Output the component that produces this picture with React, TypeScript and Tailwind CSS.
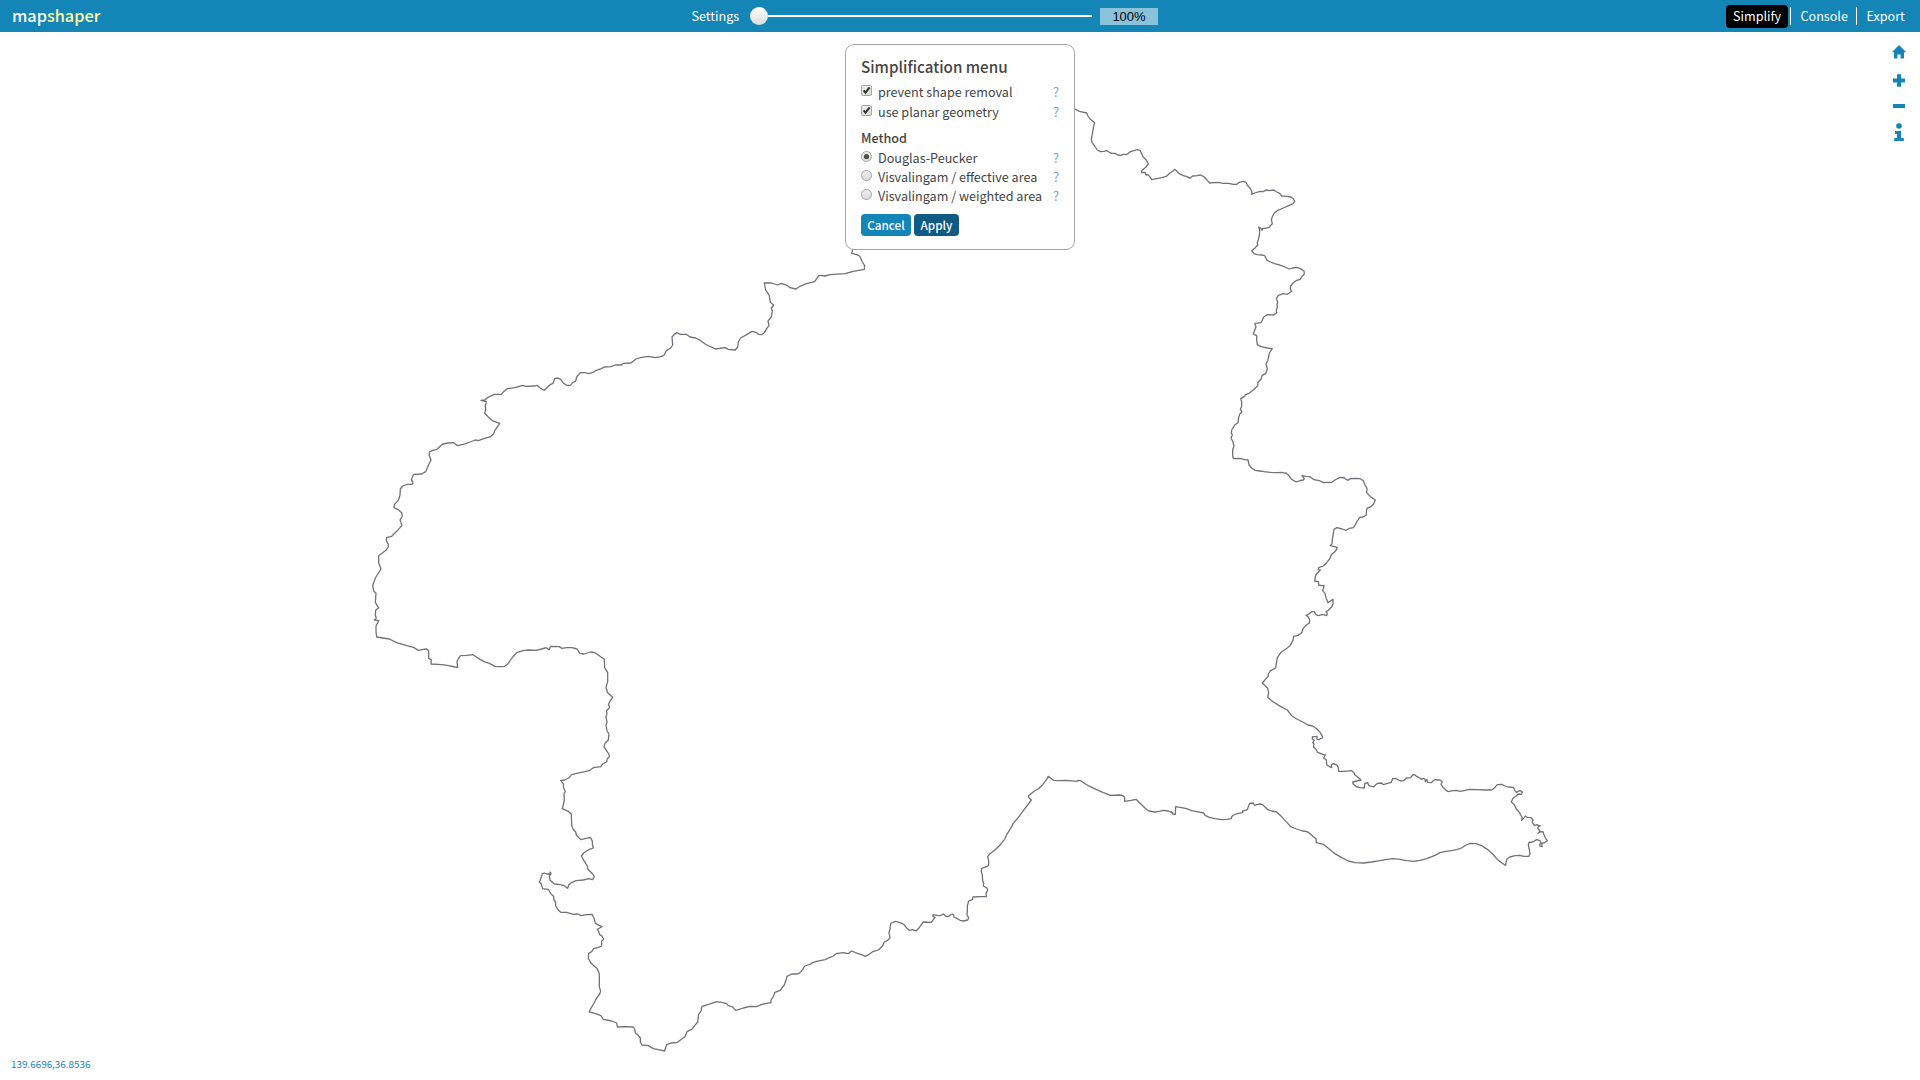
import React from 'react';

type Section = { x: number; y: number; points: string };

// Boundary line, digitised in tiles at three units per pixel.
const SECTIONS: Section[] = [
  {
    x: 1060,
    y: 90,
    points:
      '40,52 45,57 58,64 80,69 84,78 90,87 98,93 104,99 101,108 99,120 97,132 94,148 96,158 104,168 112,180 121,185 131,184 141,182 148,187 155,190 165,190 173,195 181,196 192,193 201,193 211,185 222,182 232,179 240,181 245,190 249,200 258,209 265,222 258,231 245,242 245,248 256,247 258,255 264,254 270,261 275,269 290,266 305,263 319,259 330,249 339,243 344,238 350,243 358,251 370,257 381,260 390,265 398,258 411,257 422,255 433,261 442,271 449,279 460,278 475,277 490,280 506,280 520,283 530,283 538,277 550,274 558,277 563,287 572,297 576,305 575,313 584,309 600,304 610,305 618,300 629,302 641,300 650,306 659,310 665,318 680,319 693,321 700,326 704,334 699,341 686,347 670,354 652,362 643,369 637,380 634,390 637,401 631,407 628,412 615,415 608,415 606,421 602,415 596,411 599,421 598,437 595,449 592,457 593,465 586,473 575,482 582,491 592,494 605,495 614,497 621,511 632,516 643,521 653,523 664,527 675,531 688,537 697,534 710,532 721,536 732,543 733,552 725,560 721,568 708,572 699,579 692,588 691,598 695,603 688,609 682,613 670,611 655,616 649,626 653,635 651,645 652,652 649,661 650,668 641,675 622,674 611,681 607,691 602,698 585,700 588,712 584,721 580,732 590,737 590,750 592,764 603,770 622,774 637,776 628,789 626,801 623,812 618,822 622,835 618,850 606,857 603,868 594,877 593,887 579,901 565,911 557,914 552,920 542,926 545,936 545,949 541,958 546,966 539,973 536,983 534,998 524,1005 515,1020 514,1029 517,1035 513,1044 519,1056 522,1068 518,1079 518,1095 520,1106 540,1105 554,1109 564,1110 567,1125 575,1134 585,1141 600,1143 612,1145 630,1147 652,1148 664,1147 680,1150',
  },
  {
    x: 1180,
    y: 470,
    points:
      '318,9 325,15 335,28 349,36 360,32 370,30 373,26 366,17 378,19 390,20 402,29 418,32 430,38 443,37 456,37 465,30 480,22 493,24 503,31 512,26 526,25 541,26 550,32 554,43 561,55 560,68 571,80 586,90 581,102 572,110 561,115 559,126 559,135 549,141 539,142 530,156 525,166 520,173 508,175 499,181 486,177 471,173 462,178 460,192 457,207 456,221 451,227 462,229 472,233 466,244 454,254 449,267 440,278 430,288 416,293 415,299 421,300 410,311 406,320 404,333 415,335 416,345 424,347 432,346 431,352 428,362 435,370 438,383 442,393 444,398 452,392 459,388 459,401 455,411 445,421 438,425 442,430 440,437 429,433 415,437 408,434 402,425 395,425 387,432 378,436 385,441 389,450 388,459 379,465 369,476 365,488 355,496 341,499 339,511 330,527 318,537 303,547 292,563 289,580 287,594 272,602 265,612 264,619 247,639 263,655 266,668 263,682 280,696 296,706 308,713 322,720 335,737 350,747 368,756 384,765 398,768 410,776 419,785 426,797 428,804 421,806 417,809 411,808 411,799 403,800 397,801 397,807 403,811 398,817 402,822 401,832 408,838 413,847 428,853 436,855 433,860 431,864 439,870 440,884 447,889 455,893 454,884 461,881 472,886 475,894 476,904 492,904 515,902 521,907 525,915 536,923 543,930 530,933 518,936 519,941 529,950 540,953 553,954 554,941 563,938 566,946 581,951 588,943',
  },
  {
    x: 1180,
    y: 720,
    points:
      '588,193 594,190 605,189 610,194 623,190 634,187 638,176 647,175 653,179 662,183 671,182 679,174 692,173 698,165 704,164 711,170 720,174 724,178 730,175 735,178 736,185 741,178 743,187 754,188 759,183 764,179 773,180 780,180 787,185 783,193 789,202 798,211 805,215 819,212 830,211 840,214 855,211 868,208 890,209 915,210 935,210 943,204 952,194 965,193 975,198 985,201 1000,202 1004,211 1009,217 1016,213 1022,212 1027,217 1024,223 1014,222 1009,227 998,236 994,246 1003,254 1009,267 1018,277 1022,285 1026,292 1025,301 1032,294 1036,288 1042,292 1053,293 1059,299 1057,307 1063,316 1071,314 1075,316 1081,317 1075,320 1073,324 1080,333 1074,340 1080,336 1089,335 1091,341 1095,352 1102,362 1095,367 1086,370 1086,380 1079,378 1080,372 1084,371 1080,362 1070,359 1058,366 1047,367 1045,375 1048,389 1050,402 1046,409 1031,409 1020,406 1005,407 990,411 981,417 978,427 977,436 966,429 953,419 938,402 922,388 905,377 888,371 872,370 858,375 845,384 830,389 815,392 797,394 780,398 765,406 740,416 720,421 700,424 680,422 660,418 640,416 620,418 600,422 575,426 550,429 525,428 505,423 485,413 465,401 445,385 430,373 418,370 409,368 408,356 400,350 389,340 381,335 368,333 350,327 332,320 326,313 315,301 302,287 290,276 275,273 262,268 248,254 240,252 231,254 223,256 220,249 209,250 205,260 202,269 194,272 188,273 188,278 175,280 160,285 155,290 154,296 140,298 125,299 105,296 88,292 75,286 71,279 50,275 35,272 20,266 0,262',
  },
  {
    x: 800,
    y: 760,
    points:
      '1140,142 1127,140 1126,163 1118,162 1114,155 1118,159 1105,153 1090,151 1078,154 1064,156 1047,153 1038,147 1025,134 1008,118 993,121 974,124 974,112 968,107 960,105 932,106 910,98 890,89 865,77 842,62 835,61 830,64 800,61 775,62 760,61 745,49 740,58 728,74 715,87 703,93 685,108 687,113 694,120 685,132 670,152 655,172 640,190 632,205 620,224 614,238 601,254 585,270 568,283 563,290 566,302 566,315 562,319 545,325 544,334 547,345 548,362 551,370 550,378 561,384 563,391 558,400 559,410 540,410 519,411 517,419 506,423 502,438 502,455 501,465 506,473 503,480 490,483 480,481 471,475 462,471 461,465 457,462 450,465 445,470 438,469 430,462 421,467 412,466 399,464 399,469 405,472 400,479 394,487 370,486 364,494 356,505 348,513 339,509 328,511 320,504 314,496 306,490 287,484 273,489 271,497 270,507 267,517 270,534 263,541 253,546 247,559 235,570 218,575 207,583 196,589 185,584 172,580 155,573 144,581 130,578 108,581 100,588 88,593 75,599 50,604 38,608 30,613 14,618 8,629 0,638',
  },
  {
    x: 530,
    y: 740,
    points:
      '810,698 802,702 785,702 771,709 768,720 763,735 750,751 735,757 729,771 723,780 723,788 705,791 690,795 680,800 660,799 640,804 617,811 608,801 594,796 590,791 575,787 560,785 545,790 530,795 516,799 513,813 506,823 503,846 494,857 485,868 471,875 465,890 452,899 443,907 423,909 410,914 406,925 404,933 385,929 370,926 355,917 336,915 331,906 331,894 323,884 316,879 314,867 310,861 285,860 262,861 260,849 245,843 220,838 213,827 195,820 178,816 181,808 194,786 198,777 209,762 212,754 208,740 208,702 202,686 193,679 182,668 175,655 176,640 185,635 191,626 205,622 215,618 215,603 221,598 216,588 209,584 206,574 202,568 209,564 216,560 207,556 196,550 193,537 186,523 170,524 153,527 143,522 130,523 110,517 92,517 84,509 77,498 77,487 72,480 71,469 63,462 55,448 38,446 33,430 28,427 33,414 37,401 43,399 50,402 58,402 61,396 63,402 58,407 60,420 73,432 90,434 103,437 113,445 116,435 124,428 138,422 160,420 176,416 188,419 193,410 188,402 174,388 172,378 162,362 154,348 161,339 176,329 190,324 187,312 187,304 182,293 168,295 152,299 139,285 137,276 129,267 125,256 124,222 115,214 97,206 99,198 103,180 102,160 106,155 101,144 100,131 92,122 104,120 116,114 125,104 140,100 165,95 178,92 190,83 212,80 218,72 230,65 232,56 238,51 237,43 229,31 222,20 225,10 235,0',
  },
  {
    x: 360,
    y: 430,
    points:
      '745,930 746,920 747,912 741,903 738,885 741,877 738,861 741,850 739,843 749,832 745,823 751,812 758,802 743,788 738,773 743,755 743,728 734,713 733,688 720,679 705,668 692,666 672,672 660,670 651,657 636,653 620,653 606,655 598,650 572,649 567,659 559,653 545,657 528,661 505,660 490,662 472,667 458,681 444,701 434,709 420,710 405,709 388,700 372,695 355,685 339,674 320,676 302,677 295,686 291,695 293,712 285,711 262,706 245,704 213,702 214,690 206,685 206,662 200,657 190,658 175,661 161,652 140,647 110,638 88,627 50,621 48,605 48,588 56,572 43,570 49,565 46,555 47,541 56,533 50,525 46,517 48,490 41,483 38,467 46,444 63,417 56,399 56,377 68,368 78,361 85,351 84,341 79,332 80,323 95,319 110,304 126,286 120,270 127,258 125,248 113,238 102,233 103,224 115,211 120,196 121,177 128,168 142,163 157,163 159,158 154,149 161,133 185,132 197,125 206,104 213,90 208,77 208,66 218,61 231,58 248,42 265,39 281,38 292,47 310,43 330,36 346,30 355,32 365,28 391,20 401,11 405,0',
  },
  {
    x: 460,
    y: 240,
    points:
      '105,570 107,568 119,550 97,542 85,531 74,520 77,508 76,499 79,485 63,481 75,480 82,473 103,463 124,463 130,456 142,446 165,443 188,436 196,439 225,438 231,436 240,444 253,451 263,441 270,434 279,430 284,416 294,414 303,419 311,430 320,436 331,436 338,428 347,423 350,411 361,398 375,398 385,401 400,397 409,391 424,386 433,381 453,380 465,375 484,375 490,370 513,369 528,357 545,352 565,349 587,353 602,350 612,346 619,332 632,324 638,315 636,291 643,283 651,278 661,283 679,283 690,291 707,294 722,302 740,315 757,322 766,327 795,323 805,328 826,330 833,321 835,306 842,294 860,284 876,274 888,277 895,283 904,284 913,278 920,266 927,256 924,243 934,231 937,213 934,204 941,195 931,187 928,167 917,150 913,129 935,129 952,135 964,130 981,136 990,143 1008,147 1020,139 1039,131 1064,125 1076,107 1086,106 1095,108 1110,104 1155,101 1180,94 1213,88 1214,77 1207,66 1199,48 1190,44 1175,40 1178,28',
  },
];

const LINE = SECTIONS.map((s) =>
  s.points
    .split(' ')
    .map((p) => {
      const [px, py] = p.split(',').map(Number);
      return `${(s.x + px / 3).toFixed(2)},${(s.y + py / 3 - 32).toFixed(2)}`;
    })
    .join(' ')
).join(' ');

const FONT = "font-['Noto_Sans_CJK_JP','Open_Sans',sans-serif]";

function Checkbox() {
  return (
    <svg width="11" height="11" viewBox="0 0 11 11" className="block shrink-0">
      <defs>
        <linearGradient id="cb" x1="0" y1="0" x2="0" y2="1">
          <stop offset="0" stopColor="#efefef" />
          <stop offset="1" stopColor="#dcdcdc" />
        </linearGradient>
      </defs>
      <rect x="0.5" y="0.5" width="10" height="10" rx="1.2" fill="url(#cb)" stroke="#a3a3a3" />
      <path d="M2.6 5.4 L4.5 7.6 L8.6 2.4" fill="none" stroke="#333" strokeWidth="2.1" />
    </svg>
  );
}

function Radio({ checked }: { checked?: boolean }) {
  return (
    <svg width="11" height="11" viewBox="0 0 11 11" className="block shrink-0">
      <defs>
        <linearGradient id="rd" x1="0" y1="0" x2="0" y2="1">
          <stop offset="0" stopColor="#f0f0f0" />
          <stop offset="1" stopColor="#d9d9d9" />
        </linearGradient>
      </defs>
      <circle cx="5.5" cy="5.5" r="5" fill="url(#rd)" stroke="#a6a6a6" />
      {checked && <circle cx="5.5" cy="5.5" r="2.6" fill="#4d4d4d" />}
    </svg>
  );
}

function Option({ label, children }: { label: string; children: React.ReactNode }) {
  return (
    <div className="flex h-[19px] items-start text-[12.6px] leading-[19px]">
      <div className="pt-[3px]">{children}</div>
      <span className="ml-[6px] whitespace-nowrap">{label}</span>
      <span className="ml-auto w-[6px] text-[#6fa3d4]">?</span>
    </div>
  );
}

export default function App() {
  return (
    <div className={`flex h-[1080px] w-[1920px] flex-col overflow-hidden bg-white ${FONT}`}>
      <header className="flex h-8 shrink-0 items-center bg-[#1385b7] text-[12.6px] leading-[19px] text-white">
        <div className="w-[691.5px] pb-[2px] pl-3 text-[16.3px] leading-[24px] font-medium">
          map<span className="text-[#ffffa8]">shaper</span>
        </div>
        <span className="w-[58.5px] pb-[2px]">Settings</span>
        <div className="flex w-[342px] items-center">
          <div className="h-[18px] w-[18px] rounded-full bg-linear-to-b from-white to-[#dcdcdc]" />
          <div className="h-[2px] flex-1 bg-white" />
        </div>
        <div className="ml-2 flex h-[17px] w-[58px] items-center justify-center bg-[#89c2db] pt-px font-['Liberation_Sans',sans-serif] text-[13px] leading-[17px] text-black">
          100%
        </div>
        <nav className="ml-[568px] flex items-center">
          <span className="h-[23px] w-[62px] rounded-[4px] bg-black pt-[1px] pl-[7px]">Simplify</span>
          <span className="ml-[2px] h-[18px] w-px bg-white" />
          <span className="w-[65px] pb-[2px] pl-[9.5px]">Console</span>
          <span className="h-[18px] w-px bg-white" />
          <span className="pb-[2px] pl-[9.5px]">Export</span>
        </nav>
      </header>

      <main className="relative h-[1048px]">
        <svg width="1920" height="1048" viewBox="0 0 1920 1048" className="block">
          <polyline points={LINE} fill="none" stroke="#71717d" strokeWidth="1.3" strokeLinejoin="round" />
        </svg>

        <section className="absolute top-3 left-[845px] h-[206px] w-[230px] rounded-[9px] border border-[#a5a5a5] bg-white px-[15px] pt-[10px] text-[#444]">
          <h2 className="text-[15.2px] leading-[22px] font-medium whitespace-nowrap">Simplification menu</h2>
          <div className="mt-[5px] flex flex-col gap-px">
            <Option label="prevent shape removal"><Checkbox /></Option>
            <Option label="use planar geometry"><Checkbox /></Option>
          </div>
          <h3 className="mt-[7px] text-[12.6px] leading-[19px] font-medium">Method</h3>
          <div className="mt-px flex flex-col">
            <Option label="Douglas-Peucker"><Radio checked /></Option>
            <Option label="Visvalingam / effective area"><Radio /></Option>
            <Option label="Visvalingam / weighted area"><Radio /></Option>
          </div>
          <div className="mt-[9px] flex gap-[3px] text-[11.7px] leading-[17px] font-medium text-white">
            <button className="h-[22px] w-[50px] rounded-[4px] bg-[#1385b7] pb-[2px]">Cancel</button>
            <button className="h-[22px] w-[45px] rounded-[4px] bg-[#105a84] pb-[2px]">Apply</button>
          </div>
        </section>

        <svg width="16" height="98" viewBox="0 0 16 98" fill="#1385b7" className="absolute top-[12px] left-[1891px]">
          <path d="M8 1 L15.2 8.3 H13 V14.6 H9.6 V10.4 H6.4 V14.6 H3 V8.3 H0.8 Z" />
          <path d="M6 30.2 H10 V34.5 H14 V38.6 H10 V42.8 H6 V38.6 H2 V34.5 H6 Z" />
          <rect x="2" y="60" width="12" height="4" />
          <circle cx="8" cy="82" r="2.8" />
          <path d="M4 87 H10 V94 H12.8 V97 H3.2 V94 H6 V90 H4 Z" />
        </svg>

        <div className="absolute bottom-[9px] left-[11px] text-[9.9px] leading-[14px] text-[#1385b7]">139.6696,36.8536</div>
      </main>
    </div>
  );
}
